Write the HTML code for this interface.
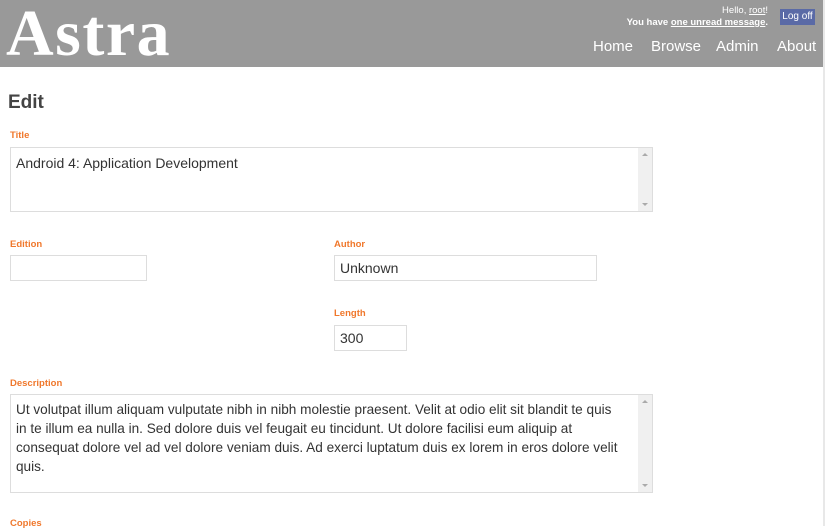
<!DOCTYPE html>
<html><head><meta charset="utf-8"><style>
*{margin:0;padding:0;box-sizing:border-box}
body{width:825px;height:526px;overflow:hidden;background:#fff;font-family:"Liberation Sans",sans-serif;position:relative}
#hdr{position:absolute;left:0;top:0;width:823px;height:67px;background:#999}
#rb{position:absolute;left:823px;top:0;width:2px;height:526px;background:#e8e8e8}
.a{position:absolute;white-space:nowrap}
.logo{left:6px;top:-4px;font-family:"Liberation Serif",serif;font-weight:bold;font-size:66px;color:#fff;letter-spacing:1.5px}
.sm{font-size:9.5px;color:#fff;text-align:right}
.nav{top:38px;font-size:15px;color:#fff}
.lbl{font-size:9.5px;font-weight:bold;color:#f0782c}
.box{position:absolute;border:1px solid #ddd;background:#fff;font-size:14px;color:#333;padding:5px}
.sb{position:absolute;right:0;top:0;bottom:0;width:14px;background:#f0f0f0}
.sb:before{content:"";position:absolute;left:4px;top:5px;border:3px solid transparent;border-bottom:3px solid #aaa;border-top:0}
.sb:after{content:"";position:absolute;left:4px;bottom:5px;border:3px solid transparent;border-top:3px solid #aaa;border-bottom:0}
</style></head><body>
<div id="hdr"></div><div id="rb"></div>
<div class="a logo">Astra</div>
<div class="a sm" style="right:57px;top:5px">Hello, <u>root</u>!</div>
<div class="a sm" style="right:57px;top:17px;font-weight:bold">You have <u>one unread message</u>.</div>
<div class="a" style="left:780px;top:9px;width:35px;height:16px;background:#5a6aa6;color:#fff;font-size:10px;line-height:16px;text-align:center">Log off</div>
<div class="a nav" style="left:593px">Home</div>
<div class="a nav" style="left:651px">Browse</div>
<div class="a nav" style="left:716px">Admin</div>
<div class="a nav" style="left:777px">About</div>
<div class="a" style="left:8px;top:92px;font-size:19px;font-weight:bold;color:#444">Edit</div>
<div class="a lbl" style="left:10px;top:130px">Title</div>
<div class="box" style="left:10px;top:147px;width:643px;height:65px;padding-top:7px">Android 4: Application Development<div class="sb"></div></div>
<div class="a lbl" style="left:10px;top:239px">Edition</div>
<div class="box" style="left:10px;top:255px;width:137px;height:26px"></div>
<div class="a lbl" style="left:334px;top:239px">Author</div>
<div class="box" style="left:334px;top:255px;width:263px;height:26px;padding:4px 5px">Unknown</div>
<div class="a lbl" style="left:334px;top:308px">Length</div>
<div class="box" style="left:334px;top:325px;width:73px;height:26px;padding:4px 5px">300</div>
<div class="a lbl" style="left:10px;top:378px">Description</div>
<div class="box" style="left:10px;top:394px;width:643px;height:99px;line-height:19px;padding:5px 16px 5px 5px;white-space:nowrap;overflow:hidden;font-size:13.6px">Ut volutpat illum aliquam vulputate nibh in nibh molestie praesent. Velit at odio elit sit blandit te quis<br>in te illum ea nulla in. Sed dolore duis vel feugait eu tincidunt. Ut dolore facilisi eum aliquip at<br>consequat dolore vel ad vel dolore veniam duis. Ad exerci luptatum duis ex lorem in eros dolore velit<br>quis.<div class="sb"></div></div>
<div class="a lbl" style="left:10px;top:518px">Copies</div>
</body></html>
